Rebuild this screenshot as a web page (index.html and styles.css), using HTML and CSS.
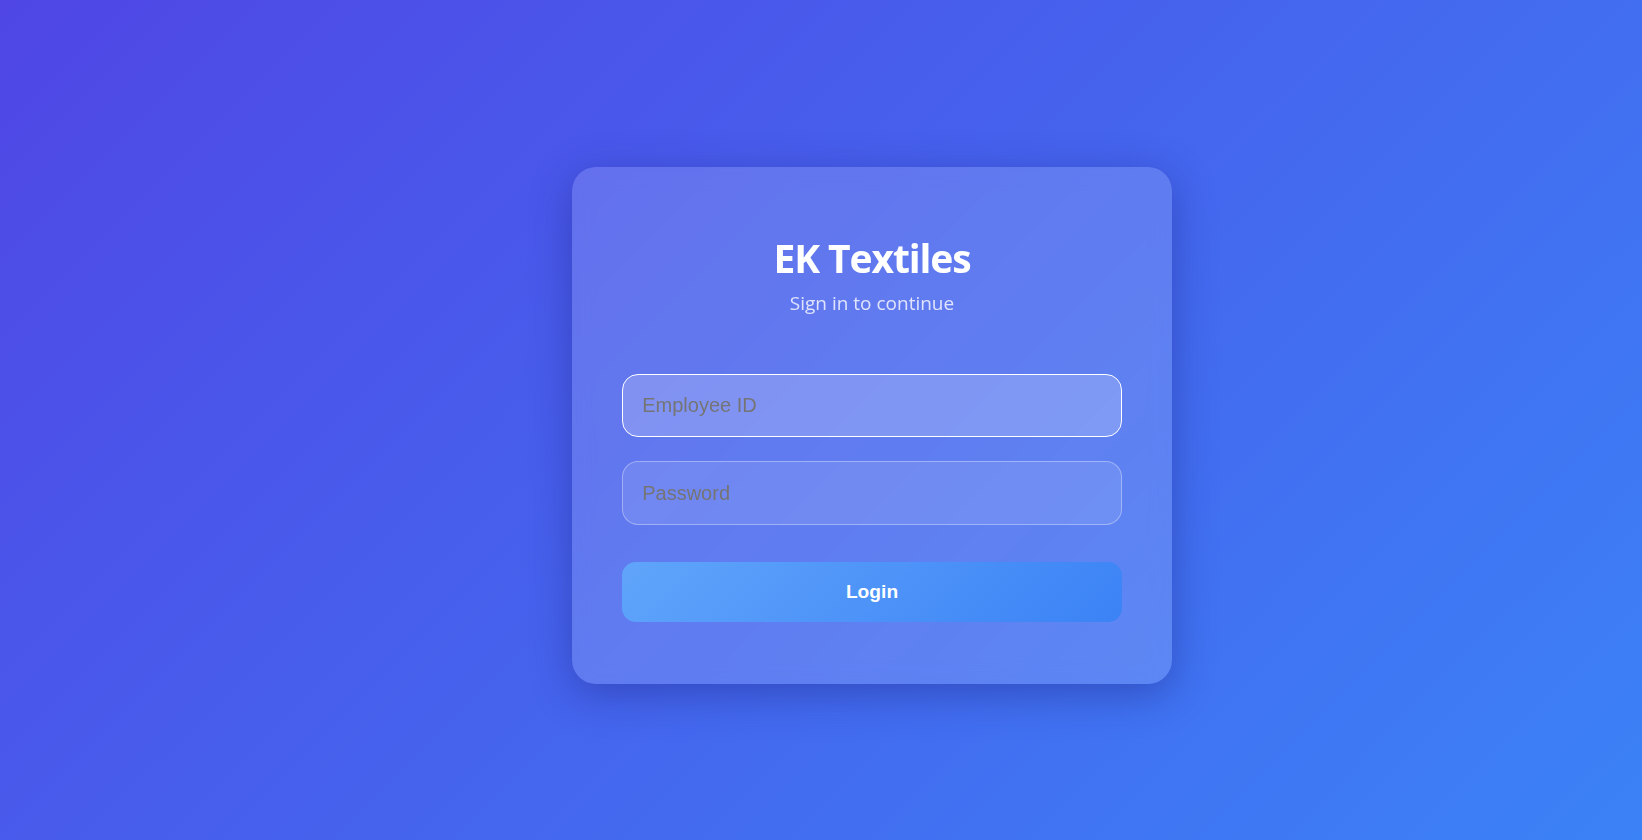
FILE: index.html
```html
<!DOCTYPE html>
<html lang="en">
<head>
  <meta charset="UTF-8">
  <meta name="viewport" content="width=device-width, initial-scale=1.0">
  <title>EK Textiles - Login</title>
  <link rel="stylesheet" href="styles.css">
</head>
<body>
  <div class="login-card">
    <div class="login-header">
      <h1>EK Textiles</h1>
      <p>Sign in to continue</p>
    </div>
    <form class="login-form" onsubmit="return false;">
      <input type="text" id="employeeId" placeholder="Employee ID" autofocus>
      <input type="password" id="password" placeholder="Password">
      <button type="submit">Login</button>
    </form>
  </div>
</body>
</html>
```

FILE: styles.css
```css
html, body {
  height: 100%;
}
body {
  font-family: 'Open Sans', 'Noto Sans', sans-serif;
  margin: 0;
  padding: 0;
  display: flex;
  justify-content: center;
  align-items: center;
  background: linear-gradient(135deg, #4f46e5 0%, #3b82f6 100%);
  color: #fff;
}
.login-card {
  box-sizing: border-box;
  width: 600px;
  margin: 11px 0 0 102px;
  padding: 67px 50px 62px;
  background: rgba(255, 255, 255, 0.15);
  border-radius: 24px;
  box-shadow: 0 10px 40px rgba(31, 38, 135, 0.45);
  backdrop-filter: blur(10px);
}
.login-header {
  text-align: center;
  margin-bottom: 58px;
}
.login-header h1 {
  margin: 0 0 9px;
  font-size: 39px;
  line-height: 48px;
  font-weight: 700;
  letter-spacing: -1.1px;
}
.login-header p {
  margin: 0;
  font-size: 19px;
  line-height: 25px;
  color: rgba(255, 255, 255, 0.8);
}
.login-form {
  display: flex;
  flex-direction: column;
}
.login-form input {
  box-sizing: border-box;
  width: 100%;
  padding: 19.2px;
  margin-bottom: 24px;
  font-family: 'Liberation Sans', Arial, sans-serif;
  font-size: 20px;
  color: #333;
  background: rgba(255, 255, 255, 0.1);
  border: 1px solid rgba(255, 255, 255, 0.35);
  border-radius: 16px;
  outline: none;
}
.login-form input:focus {
  background: rgba(255, 255, 255, 0.2);
  border-color: #fff;
}
.login-form button {
  margin-top: 13px;
  padding: 19.2px;
  font-family: 'Liberation Sans', Arial, sans-serif;
  font-size: 19.2px;
  font-weight: 700;
  color: #fff;
  background: linear-gradient(135deg, #60a5fa 0%, #3b82f6 100%);
  border: none;
  border-radius: 14px;
  cursor: pointer;
}
```
